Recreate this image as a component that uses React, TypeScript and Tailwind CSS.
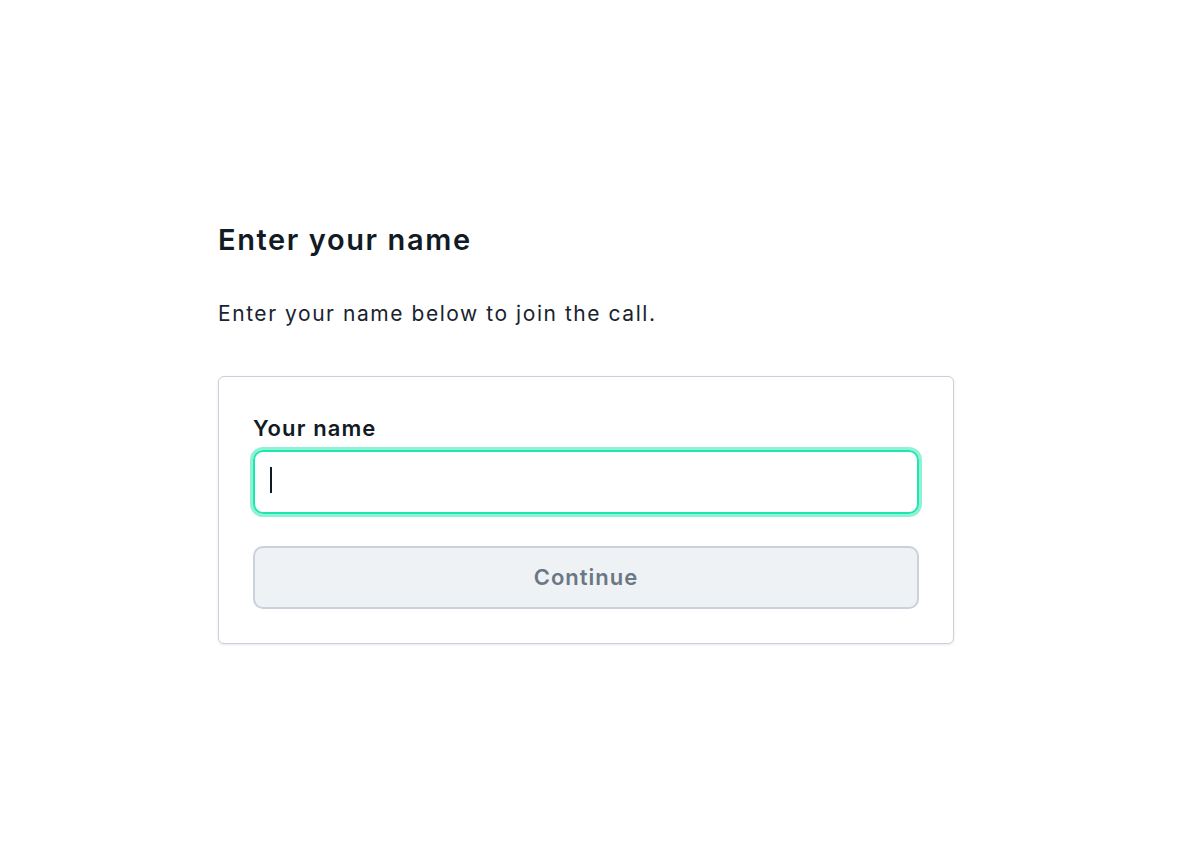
import React, { useState } from 'react';

export default function App() {
  const [name, setName] = useState('');

  return (
    <div className="min-h-screen bg-white pl-[218px] pt-[222px] font-['Inter',sans-serif] text-[#121a24]">
      <div className="w-[736px]">
        <h1 className="text-[29px] leading-[36px] font-semibold tracking-[1.6px]">Enter your name</h1>
        <p className="mt-[42px] text-[21px] leading-[28px] tracking-[1.55px] text-[#1a2330]">
          Enter your name below to join the call.
        </p>

        <div className="mt-[48px] rounded-[6px] border border-[#c8d1dc] bg-white px-[34px] pt-[35px] pb-[34px] shadow-[0_1px_3px_rgba(18,26,36,0.1)]">
          <label htmlFor="name" className="block text-[22px] leading-[32px] font-semibold tracking-[1.1px]">
            Your name
          </label>
          <div className="relative mt-[6px]">
            <input
              id="name"
              autoFocus
              value={name}
              onChange={(e) => setName(e.target.value)}
              className={`block h-[64px] w-full rounded-[10px] border-2 border-[#1ce6b2] px-[15px] text-[20px] text-[#121a24] outline-none shadow-[0_0_0_3px_#8ff2d3] ${
                name ? 'caret-[#121a24]' : 'caret-transparent'
              }`}
            />
            {!name && (
              <span className="pointer-events-none absolute left-[17px] top-[17px] h-[26px] w-[2px] bg-[#121a24]" />
            )}
          </div>
          <button
            disabled={!name}
            className="mt-[32px] flex h-[63px] w-full items-center justify-center rounded-[10px] border-2 border-[#c8d1dc] bg-[#eff2f5] text-[22px] font-semibold tracking-[1px] text-[#6b7785]"
          >
            Continue
          </button>
        </div>
      </div>
    </div>
  );
}
